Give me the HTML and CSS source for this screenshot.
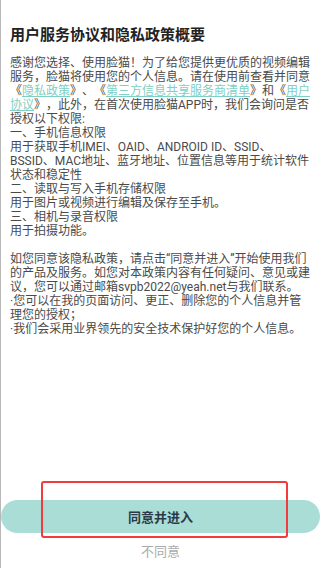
FILE: index.html
```html
<!DOCTYPE html>
<html>
	<head>
		<meta charset="UTF-8">
		<title>用户服务协议和隐私政策概要</title>
		<link rel="stylesheet" href="styles.css">
	</head>

	<body>
		<div class="dialog">
			<h1 class="title">用户服务协议和隐私政策概要</h1>
			<div class="content">
				<p>
					感谢您选择、使用脸猫！为了给您提供更优质的视频编辑<br>
					服务，脸猫将使用您的个人信息。请在使用前查看并同意<br>
					《<a href="#">隐私政策</a>》、《<a href="#">第三方信息共享服务商清单</a>》和《<a href="#">用户<br>
					协议</a>》，此外，在首次使用脸猫APP时，我们会询问是否<br>
					授权以下权限:<br>
					一、手机信息权限<br>
					用于获取手机IMEI、OAID、ANDROID ID、SSID、<br>
					BSSID、MAC地址、蓝牙地址、位置信息等用于统计软件<br>
					状态和稳定性<br>
					二、读取与写入手机存储权限<br>
					用于图片或视频进行编辑及保存至手机。<br>
					三、相机与录音权限<br>
					用于拍摄功能。
				</p>
				<p>
					如您同意该隐私政策，请点击“同意并进入”开始使用我们<br>
					的产品及服务。如您对本政策内容有任何疑问、意见或建<br>
					议，您可以通过邮箱svpb2022@yeah.net与我们联系。<br>
					·您可以在我的页面访问、更正、删除您的个人信息并管<br>
					理您的授权；<br>
					·我们会采用业界领先的安全技术保护好您的个人信息。
				</p>
			</div>
			<div class="actions">
				<button class="agree">同意并进入</button>
				<div class="refuse">不同意</div>
			</div>
			<div class="mark"></div>
		</div>
	</body>
</html>
```

FILE: styles.css
```css
* {
	box-sizing: border-box;
}

body {
	margin: 0;
	background: #fff;
	font-family: Roboto, "Noto Sans CJK SC", sans-serif;
}

.dialog {
	position: relative;
	height: 568px;
	border-left: 1px solid #b8b8b8;
	padding: 25px 0 9px;
	display: flex;
	flex-direction: column;
}

.title {
	margin: 0 0 11px 9px;
	font-size: 15px;
	line-height: 20px;
	font-weight: bold;
	color: #222;
	white-space: nowrap;
}

.content {
	flex: 1;
	padding: 0 0 0 9px;
	font-size: 12px;
	line-height: 14px;
	color: #4a4a4a;
	white-space: nowrap;
	text-spacing-trim: space-all;
}

.content p {
	margin: 0 0 14px;
}

.content a {
	color: #7fcfc4;
	text-decoration: underline;
}

.actions {
	display: flex;
	flex-direction: column;
	align-items: center;
}

.agree {
	width: 100%;
	height: 33px;
	border: none;
	border-radius: 17px;
	background: #a9ddd6;
	color: #2b3a48;
	font-family: inherit;
	font-size: 13px;
	font-weight: bold;
	padding: 0;
}

.refuse {
	margin-top: 12px;
	font-size: 13px;
	line-height: 14px;
	color: #ababab;
}

.mark {
	position: absolute;
	left: 40px;
	top: 481px;
	width: 247px;
	height: 57px;
	border: 2px solid #f03c3c;
	border-radius: 3px;
}
```
